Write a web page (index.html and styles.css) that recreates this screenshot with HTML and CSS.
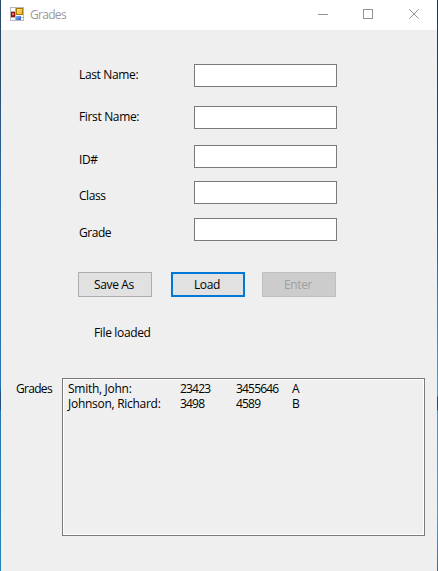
FILE: index.html
```
<!DOCTYPE html>
<html lang="en">
<head>
<meta charset="utf-8">
<title>Grades</title>
<link rel="stylesheet" href="styles.css">
</head>
<body>
<div class="desktop">
<main class="window">
  <header class="titlebar">
    <svg class="app-icon" width="14" height="14" viewBox="0 0 14 14" shape-rendering="crispEdges">
      <defs>
        <linearGradient id="gold" x2="1" y2="1"><stop stop-color="#ffe98a"/><stop offset="1" stop-color="#f2b200"/></linearGradient>
        <linearGradient id="blue" x2="1" y2="1"><stop stop-color="#8bb4f0"/><stop offset="1" stop-color="#2458c8"/></linearGradient>
      </defs>
      <path fill="#fff" stroke="#b8b8b8" d="M.5.5h13v13H.5zM5.5.5v13M.5 10.500h13M.5 4.500h5"/>
      <path fill="#c52016" stroke="#8d1410" d="M1.500 5.500h3v4h-3z"/>
      <path fill="#e8705c" d="M2 6h2v2H2z"/>
      <path fill="url(#gold)" stroke="#a87910" d="M6.500 1.500h6v6h-6z"/>
      <path fill="url(#blue)" d="M6 9h5v4H6z"/>
    </svg>
    <span class="title">Grades</span>
    <svg class="controls" width="104" height="10" viewBox="0 0 104 10" fill="none" stroke="#949494">
      <path shape-rendering="crispEdges" d="M0 5.500h10M45.500.5h9v9h-9z"/>
      <path d="M91.300.3l9.400 9.400M100.700.3l-9.400 9.400"/>
    </svg>
  </header>

  <form class="fields">
    <label for="last">Last Name:</label><input id="last" type="text">
    <label for="first">First Name:</label><input id="first" type="text">
    <label for="id" class="low">ID#</label><input id="id" type="text">
    <label for="class" class="low">Class</label><input id="class" type="text">
    <label for="grade" class="low">Grade</label><input id="grade" type="text">
  </form>

  <div class="buttons">
    <button type="button">Save As</button>
    <button type="button" class="focused">Load</button>
    <button type="button" disabled>Enter</button>
  </div>

  <p class="status">File loaded</p>

  <section class="results">
    <span class="results-label">Grades</span>
    <div class="list">
      <span>Smith, John:</span><span class="num">23423</span><span class="num">3455646</span><span>A</span>
      <span>Johnson, Richard:</span><span class="num">3498</span><span class="num">4589</span><span>B</span>
    </div>
  </section>
</main>
</div>
</body>
</html>
```
FILE: styles.css
```
* { box-sizing: border-box; }
body {
  margin: 0;
  font: 12px/15px "Open Sans", "Noto Sans", sans-serif;
  letter-spacing: -0.35px;
  color: #000;
}
.desktop {
  height: 571px;
  padding: 0 1px;
  background:
    linear-gradient(#294767 0, #294767 60px, #2b6ca8 200px, #2874b2 385px, #234f80 395px, #234f80 408px, #2874ae 412px, #2583b2 571px) left / 1px 100% no-repeat,
    linear-gradient(#243649 0, #34506c 200px, #6293b4 380px, #6293b4 396px, #2c4665 397px, #2c4665 410px, #5e8eaf 411px, #6b9aaf 515px, #316b9d 571px) right / 1px 100% no-repeat;
}
.window { height: 100%; background: #efefef; }
.titlebar {
  display: flex;
  align-items: center;
  height: 30px;
  padding: 0 15px 0 9px;
  background: #fff;
  color: #999;
}
.app-icon { margin-top: -2px; }
.title { margin: -1px 0 0 6px; letter-spacing: -0.7px; }
.controls { margin: -2px 0 0 auto; }
.fields {
  display: grid;
  grid-template-columns: 115px 143px;
  grid-template-rows: 42px 39px 36px 37px 23px;
  padding: 34px 0 0 78px;
}
.fields label { padding-top: 3px; }
.fields .low { padding-top: 7px; }
.fields input {
  width: 143px;
  height: 23px;
  margin: 0;
  border: 1px solid #7a7a7a;
  border-radius: 0;
  background: #fff;
  outline: none;
}
.fields .low { letter-spacing: -0.45px; }
.buttons { display: flex; margin: 31px 0 0 77px; }
.buttons button {
  width: 74px;
  height: 25px;
  margin: 0 19px 0 0;
  padding: 0 2px 1px 0;
  border: 1px solid #adadad;
  border-radius: 0;
  background: #e1e1e1;
  color: #000;
  font: inherit;
  letter-spacing: inherit;
}
.buttons .focused { margin-right: 17px; border: 2px solid #0078d7; }
.buttons button:disabled { border-color: #bfbfbf; background: #ccc; color: #a0a0a0; }
.status { margin: 28px 0 0 93px; }
.results { display: flex; margin: 38px 0 0 15px; }
.results-label { width: 46px; padding-top: 3px; letter-spacing: -0.7px; }
.list {
  display: grid;
  grid-template-columns: 112px 56px 56px 1fr;
  grid-auto-rows: 15px;
  width: 363px;
  height: 158px;
  padding: 2px 5px;
  border: 1px solid #7a7a7a;
  box-shadow: inset 0 0 0 1px #fff;
  letter-spacing: -0.28px;
}
.list span { white-space: nowrap; }
.list .num { letter-spacing: -0.8px; }
```
